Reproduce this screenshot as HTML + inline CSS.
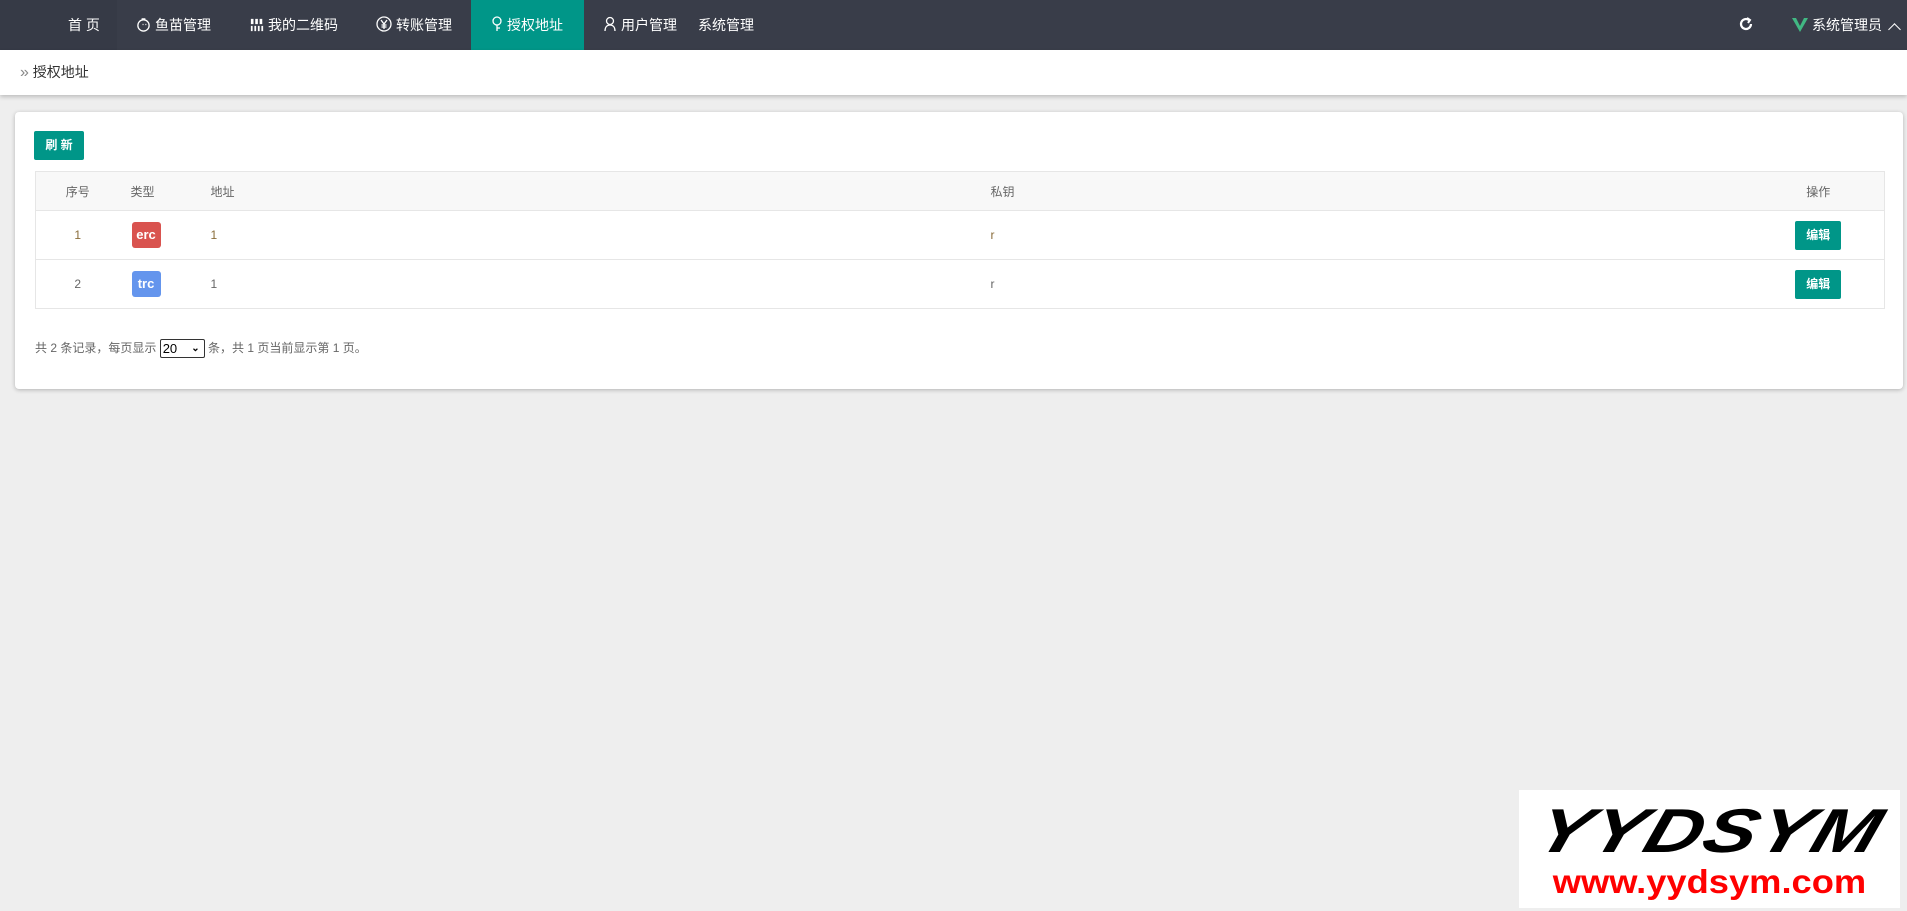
<!DOCTYPE html>
<html><head><meta charset="utf-8"><style>
*{margin:0;padding:0;box-sizing:border-box}
body{width:1907px;height:911px;background:#eeeeee;font-family:"Liberation Sans","Noto Sans CJK SC",sans-serif;position:relative;overflow:hidden;color:#666}
.nav{position:absolute;left:0;top:0;width:1907px;height:50px;background:#393d49;color:#fff;font-size:14px}
.nav .it{position:absolute;top:0;height:50px;line-height:50px;white-space:nowrap}
.nav svg{vertical-align:-2px;margin-right:4px}
.bc{position:absolute;left:0;top:50px;width:1907px;height:45px;background:#fff;box-shadow:0 2px 4px rgba(0,0,0,.2);font-size:14px;color:#333;line-height:45px;padding-left:20px}
.card{position:absolute;left:15px;top:112px;width:1888px;height:277px;background:#fff;border-radius:4px;box-shadow:0 1px 4px rgba(0,0,0,.25)}
.btn{position:absolute;background:#009688;color:#fff;border-radius:2px;font-size:12px;text-align:center}
table{position:absolute;left:20px;top:59px;width:1850px;border-collapse:collapse;font-size:12px;color:#666;table-layout:fixed}
td,th{border-top:1px solid #e6e6e6;font-weight:normal;text-align:left;position:relative}
table{border:1px solid #e6e6e6}
th{height:39px;background:#f8f8f8}
td{height:49px}
.bd{display:inline-block;width:29px;height:26px;line-height:26px;border-radius:3px;color:#fff;font-weight:bold;text-align:center;font-size:13px}
.pg{position:absolute;left:20px;top:226px;font-size:12px;color:#666;line-height:20px}
.sel{display:inline-block;width:45px;height:19px;border:1px solid #333;border-radius:2px;vertical-align:middle;color:#000;font-size:13px;line-height:17px;padding-left:2px;position:relative}
</style></head><body>
<div class="nav">
<div class="it" style="left:0;width:117px;background:#363a46;padding-left:68px">首 页</div>
<div class="it" style="left:136px"><svg width="15" height="15" viewBox="0 0 16 16" fill="none" stroke="#fff" stroke-width="1.4"><circle cx="8" cy="9" r="6"/><path d="M6 2h4M7 8h1M10 8h1"/></svg>鱼苗管理</div>
<div class="it" style="left:250px"><svg width="14" height="14" viewBox="0 0 16 16" fill="#fff"><rect x="1" y="1" width="3" height="6"/><rect x="6" y="1" width="3" height="6"/><rect x="11" y="1" width="3" height="6"/><rect x="1" y="9" width="2" height="6"/><rect x="5" y="9" width="2" height="6"/><rect x="9" y="9" width="2" height="6"/><rect x="13" y="9" width="2" height="6"/></svg>我的二维码</div>
<div class="it" style="left:376px"><svg width="16" height="16" viewBox="0 0 16 16" fill="none" stroke="#fff" stroke-width="1.3"><circle cx="8" cy="8" r="7"/><path d="M5 4l3 4 3-4M8 8v5M5.5 9h5M5.5 11h5"/></svg>转账管理</div>
<div class="it" style="left:471px;width:113px;background:#009688;padding-left:20px"><svg width="12" height="16" viewBox="0 0 12 16" fill="none" stroke="#fff" stroke-width="1.3"><circle cx="6" cy="5" r="4"/><path d="M6 9v6M6 12h3"/></svg>授权地址</div>
<div class="it" style="left:603px"><svg width="14" height="16" viewBox="0 0 14 16" fill="none" stroke="#fff" stroke-width="1.3"><circle cx="7" cy="5" r="3.5"/><path d="M2 15c0-4 2-6 5-6s5 2 5 6"/></svg>用户管理</div>
<div class="it" style="left:698px">系统管理</div>
<div class="it" style="left:1738px"><svg width="16" height="16" viewBox="0 0 16 16" fill="none" stroke="#fff" stroke-width="2.2"><path d="M13 8a5 5 0 1 1-2-4"/><path d="M9 2l3 2-2 3" stroke-width="2"/></svg></div>
<div class="it" style="left:1792px"><svg width="16" height="14" viewBox="0 0 16 14"><path d="M0 0h4l4 8 4-8h4L8 14z" fill="#41b883"/></svg>系统管理员 <span style="display:inline-block;width:9px;height:9px;border-left:1.5px solid #fff;border-top:1.5px solid #fff;transform:rotate(45deg);margin-left:4px;vertical-align:-4px"></span></div>
</div>
<div class="bc"><span style="color:#888;font-size:16px">»</span> 授权地址</div>
<div class="card">
<div class="btn" style="left:19px;top:19px;width:50px;height:29px;line-height:29px;font-weight:bold">刷 新</div>
<table>
<tr><th style="width:84px;text-align:center">序号</th><th style="width:91px;padding-left:11px">类型</th><th style="width:780px">地址</th><th>私钥</th><th style="width:132px;text-align:center">操作</th></tr>
<tr><td style="text-align:center;color:#8a6d3b">1</td><td style="padding-left:12px"><span class="bd" style="background:#d9534f">erc</span></td><td style="color:#8a6d3b">1</td><td style="color:#8a6d3b">r</td><td style="text-align:center"><span class="btn" style="position:static;display:inline-block;width:46px;height:29px;line-height:29px;font-weight:bold">编辑</span></td></tr>
<tr><td style="text-align:center">2</td><td style="padding-left:12px"><span class="bd" style="background:#6495ed">trc</span></td><td>1</td><td>r</td><td style="text-align:center"><span class="btn" style="position:static;display:inline-block;width:46px;height:29px;line-height:29px;font-weight:bold">编辑</span></td></tr>
</table>
<div class="pg">共 2 条记录，每页显示 <span class="sel">20<span style="position:absolute;right:4px;top:0;font-size:10px;font-weight:bold">&#8964;</span></span> 条，共 1 页当前显示第 1 页。</div>
</div>
<div style="position:absolute;left:1519px;top:790px;width:381px;height:118px;background:#fff;text-align:center">
<div style="font-family:'Liberation Sans',sans-serif;font-weight:bold;font-style:italic;font-size:62px;color:#000;line-height:64px;margin-top:10px;letter-spacing:1px;transform:scaleX(1.28) skewX(-14deg)">YYDSYM</div>
<div style="font-family:'Liberation Sans',sans-serif;font-weight:bold;font-size:33px;color:#f00;line-height:36px;transform:scaleX(1.1)">www.yydsym.com</div>
</div>
</body></html>
